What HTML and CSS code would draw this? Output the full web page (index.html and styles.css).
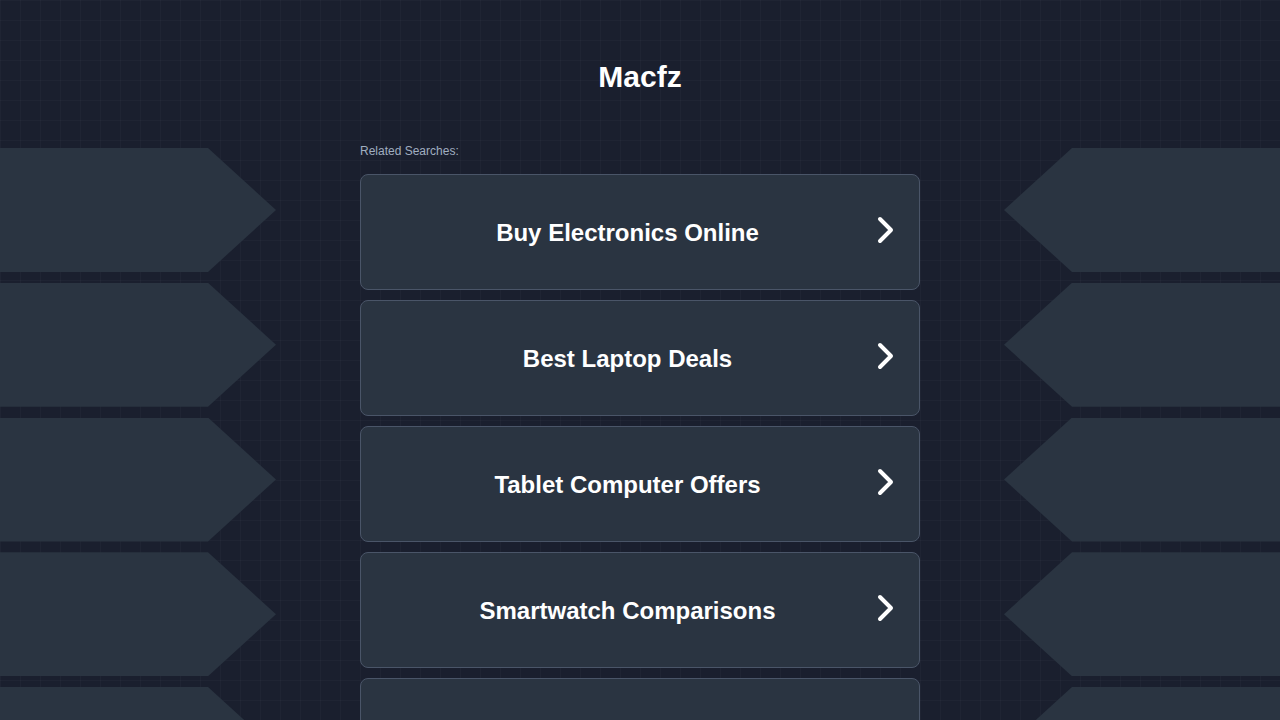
FILE: index.html
```html
<!DOCTYPE html>
<html lang="en">
<head>
    <meta charset="UTF-8">
    <meta name="viewport" content="width=device-width, initial-scale=1.0">
    <title>Macfz</title>
    <link rel="stylesheet" href="styles.css">
</head>
<body>

<!-- Decorative side arrows -->
<div class="side side-left">
    <div class="arrow"></div>
    <div class="arrow"></div>
    <div class="arrow"></div>
    <div class="arrow"></div>
    <div class="arrow"></div>
</div>
<div class="side side-right">
    <div class="arrow"></div>
    <div class="arrow"></div>
    <div class="arrow"></div>
    <div class="arrow"></div>
    <div class="arrow"></div>
</div>

<div class="page">
    <h1 class="site-title">Macfz</h1>

    <p class="related-label">Related Searches:</p>

    <div class="search-list">
        <a class="search-item" href="#">
            <span class="search-text">Buy Electronics Online</span>
            <svg class="chevron" viewBox="0 0 24 28" width="24" height="28"><path d="M7 3 L18 14 L7 25"/></svg>
        </a>
        <a class="search-item" href="#">
            <span class="search-text">Best Laptop Deals</span>
            <svg class="chevron" viewBox="0 0 24 28" width="24" height="28"><path d="M7 3 L18 14 L7 25"/></svg>
        </a>
        <a class="search-item" href="#">
            <span class="search-text">Tablet Computer Offers</span>
            <svg class="chevron" viewBox="0 0 24 28" width="24" height="28"><path d="M7 3 L18 14 L7 25"/></svg>
        </a>
        <a class="search-item" href="#">
            <span class="search-text">Smartwatch Comparisons</span>
            <svg class="chevron" viewBox="0 0 24 28" width="24" height="28"><path d="M7 3 L18 14 L7 25"/></svg>
        </a>
        <a class="search-item" href="#">
            <span class="search-text">Gaming Console Bundles</span>
            <svg class="chevron" viewBox="0 0 24 28" width="24" height="28"><path d="M7 3 L18 14 L7 25"/></svg>
        </a>
    </div>
</div>

</body>
</html>
```

FILE: styles.css
```css
body {
    margin: 0;
    font-family: "Liberation Sans", Arial, sans-serif;
    background-color: #1a1f2e;
    background-image:
        linear-gradient(rgba(255, 255, 255, 0.025) 1px, transparent 1px),
        linear-gradient(90deg, rgba(255, 255, 255, 0.025) 1px, transparent 1px);
    background-size: 20px 20px;
    color: #fff;
    min-height: 720px;
    overflow: hidden;
}

/* side decoration */
.side {
    position: absolute;
    top: 148px;
    width: 276px;
    display: flex;
    flex-direction: column;
    gap: 10.75px;
}

.side-left {
    left: 0;
}

.side-right {
    right: 0;
}

.arrow {
    height: 124px;
    background-color: #2a3441;
}

.side-left .arrow {
    clip-path: polygon(0 0, 208px 0, 100% 50%, 208px 100%, 0 100%);
}

.side-right .arrow {
    clip-path: polygon(68px 0, 100% 0, 100% 100%, 68px 100%, 0 50%);
}

.page {
    position: relative;
    width: 560px;
    margin: 0 auto;
    padding-top: 60px;
}

.site-title {
    margin: 0;
    text-align: center;
    font-size: 30px;
    line-height: 34px;
    font-weight: bold;
}

.related-label {
    margin: 50px 0 16px;
    font-size: 12px;
    line-height: 14px;
    color: #a0aec0;
}

.search-list {
    display: flex;
    flex-direction: column;
    gap: 10px;
}

.search-item {
    display: flex;
    align-items: center;
    height: 114px;
    padding: 0 24px 0 21px;
    background-color: #2a3441;
    border: 1px solid #4a5568;
    border-radius: 8px;
    color: #fff;
    text-decoration: none;
}

.search-text {
    flex: 1;
    margin-top: 2px;
    text-align: center;
    font-size: 24px;
    font-weight: bold;
}

.chevron {
    fill: none;
    stroke: #fff;
    stroke-width: 4;
    stroke-linecap: round;
    stroke-linejoin: round;
    margin: -4px -2px 0 0;
}
```
